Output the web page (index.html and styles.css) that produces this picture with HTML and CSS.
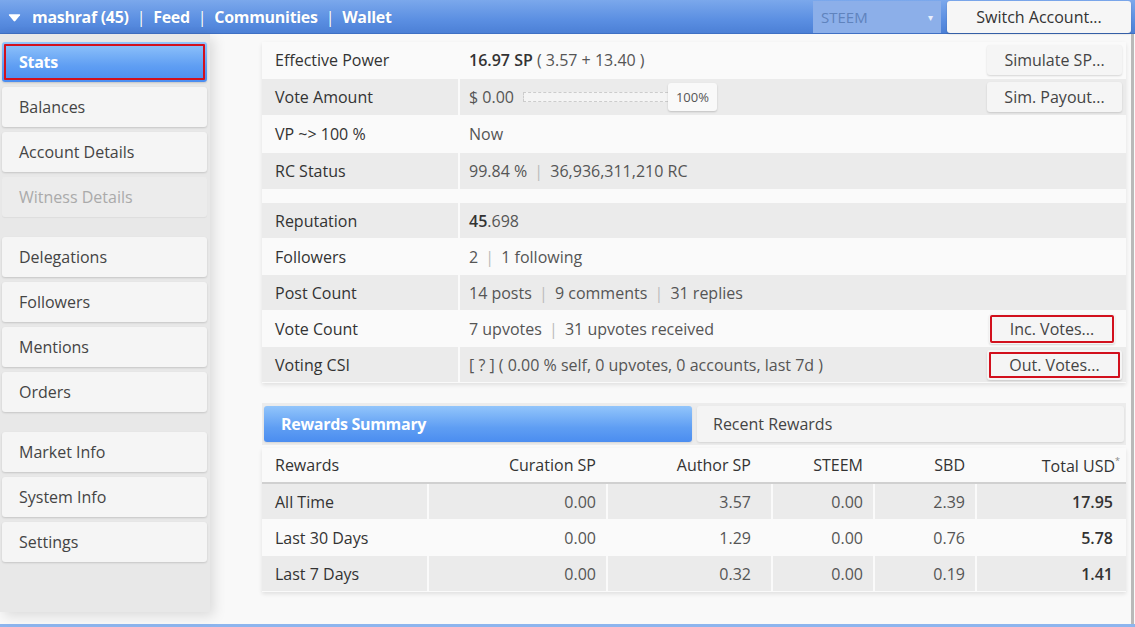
FILE: index.html
```html
<!DOCTYPE html>
<html lang="en">
<head>
    <meta charset="UTF-8">
    <title>Stats - mashraf</title>
    <link rel="stylesheet" href="styles.css">
</head>
<body>

<div class="topbar">
    <div class="nav">
        <svg class="caret" width="13" height="9" viewBox="0 0 13 9"><path d="M1.5 1.2 H11.5 Q12.6 1.2 12 2.2 L7.3 8 Q6.5 8.8 5.7 8 L1 2.2 Q0.4 1.2 1.5 1.2 Z" fill="#fff"/></svg>
        <span>mashraf (45)</span>
        <span class="sep">|</span>
        <span>Feed</span>
        <span class="sep">|</span>
        <span>Communities</span>
        <span class="sep">|</span>
        <span>Wallet</span>
    </div>
    <div class="chain-select">
        <span>STEEM</span>
        <span class="arrow">▾</span>
    </div>
    <button class="switch-btn">Switch Account...</button>
</div>

<div class="app">
    <div class="sidebar">
        <div class="menu-item active marked">Stats</div>
        <div class="menu-item">Balances</div>
        <div class="menu-item">Account Details</div>
        <div class="menu-item disabled group-end">Witness Details</div>
        <div class="menu-item">Delegations</div>
        <div class="menu-item">Followers</div>
        <div class="menu-item">Mentions</div>
        <div class="menu-item group-end">Orders</div>
        <div class="menu-item">Market Info</div>
        <div class="menu-item">System Info</div>
        <div class="menu-item">Settings</div>
    </div>

    <div class="main">
        <div class="card">
            <table class="stats">
                <tr class="big">
                    <td class="label">Effective Power</td>
                    <td class="value"><b>16.97 SP</b> ( 3.57 + 13.40 )</td>
                    <td class="action"><button class="btn">Simulate SP...</button></td>
                </tr>
                <tr class="big alt">
                    <td class="label">Vote Amount</td>
                    <td class="value">
                        <div class="vote-amount">
                            <span>$ 0.00</span>
                            <span class="track"></span>
                            <span class="pct">100%</span>
                        </div>
                    </td>
                    <td class="action"><button class="btn">Sim. Payout...</button></td>
                </tr>
                <tr class="big">
                    <td class="label">VP ~&gt; 100 %</td>
                    <td class="value">Now</td>
                    <td class="action"></td>
                </tr>
                <tr class="big alt">
                    <td class="label">RC Status</td>
                    <td class="value">99.84 % <span class="pipe">|</span> 36,936,311,210 RC</td>
                    <td class="action"></td>
                </tr>
                <tr class="spacer"><td colspan="3"></td></tr>
                <tr class="alt">
                    <td class="label">Reputation</td>
                    <td class="value"><b>45</b>.698</td>
                    <td class="action"></td>
                </tr>
                <tr>
                    <td class="label">Followers</td>
                    <td class="value">2 <span class="pipe">|</span> 1 following</td>
                    <td class="action"></td>
                </tr>
                <tr class="alt">
                    <td class="label">Post Count</td>
                    <td class="value">14 posts <span class="pipe">|</span> 9 comments <span class="pipe">|</span> 31 replies</td>
                    <td class="action"></td>
                </tr>
                <tr>
                    <td class="label">Vote Count</td>
                    <td class="value">7 upvotes <span class="pipe">|</span> 31 upvotes received</td>
                    <td class="action"><button class="btn small marked">Inc. Votes...</button></td>
                </tr>
                <tr class="alt">
                    <td class="label">Voting CSI</td>
                    <td class="value">[ ? ] ( 0.00 % self, 0 upvotes, 0 accounts, last 7d )</td>
                    <td class="action"><button class="btn marked inner">Out. Votes...</button></td>
                </tr>
            </table>
        </div>

        <div class="tabs">
            <div class="tab active">Rewards Summary</div>
            <div class="tab">Recent Rewards</div>
        </div>

        <div class="card rewards-card">
            <table class="rewards">
                <colgroup>
                    <col style="width: 166px">
                    <col style="width: 179px">
                    <col style="width: 165px">
                    <col style="width: 102px">
                    <col style="width: 102px">
                    <col>
                </colgroup>
                <thead>
                    <tr>
                        <th class="name">Rewards</th>
                        <th>Curation SP</th>
                        <th class="wide">Author SP</th>
                        <th>STEEM</th>
                        <th>SBD</th>
                        <th class="total">Total USD<sup>*</sup></th>
                    </tr>
                </thead>
                <tbody>
                    <tr class="alt">
                        <td class="name">All Time</td>
                        <td>0.00</td>
                        <td class="wide">3.57</td>
                        <td>0.00</td>
                        <td>2.39</td>
                        <td class="total">17.95</td>
                    </tr>
                    <tr>
                        <td class="name">Last 30 Days</td>
                        <td>0.00</td>
                        <td class="wide">1.29</td>
                        <td>0.00</td>
                        <td>0.76</td>
                        <td class="total">5.78</td>
                    </tr>
                    <tr class="alt">
                        <td class="name">Last 7 Days</td>
                        <td>0.00</td>
                        <td class="wide">0.32</td>
                        <td>0.00</td>
                        <td>0.19</td>
                        <td class="total">1.41</td>
                    </tr>
                </tbody>
            </table>
        </div>
    </div>
</div>

<div class="bottom-line"></div>

</body>
</html>
```

FILE: styles.css
```css
body {
    font-family: "Open Sans", Arial, sans-serif;
    font-size: 16px;
    margin: 0;
    background-color: #f9f9f9;
    color: #333;
    height: 627px;
    overflow: hidden;
}

/* Barra superior */
.topbar {
    height: 34px;
    display: flex;
    align-items: center;
    background: linear-gradient(#7ba8ec, #5b8fe2 60%, #4c80d6);
    border-bottom: 1px solid #3f70c4;
    box-sizing: border-box;
    padding-right: 4px;
}

.nav {
    flex: 1;
    display: flex;
    align-items: center;
    gap: 8px;
    padding-left: 8px;
    color: #fff;
    font-weight: 700;
    font-size: 16px;
    letter-spacing: -0.3px;
    text-shadow: 0 0 1px rgba(0, 0, 0, 0.15);
}

.nav .caret {
    margin-right: 3px;
    margin-top: 2px;
}

.nav .sep {
    font-weight: 400;
}

.chain-select {
    width: 128px;
    height: 32px;
    box-sizing: border-box;
    display: flex;
    align-items: center;
    justify-content: space-between;
    padding: 0 8px;
    background-color: #8cafe9;
    color: #5f83bd;
    font-size: 15px;
    margin-right: 6px;
}

.chain-select .arrow {
    font-size: 10px;
    color: #e8eefb;
}

.switch-btn {
    width: 184px;
    height: 32px;
    font-family: inherit;
    font-size: 16px;
    color: #333;
    background-color: #f6f6f6;
    border: none;
    border-radius: 3px;
    box-shadow: 0 1px 2px rgba(0, 0, 0, 0.2);
}

/* Corpo */
.app {
    display: flex;
    height: 590px;
    border-right: 3px solid #b9b9b9;
    box-sizing: border-box;
    width: 1134px;
}

.sidebar {
    width: 210px;
    height: 578px;
    background-color: #e8e8e8;
    padding: 8px 3px 0 2px;
    box-sizing: border-box;
    box-shadow: 4px 4px 12px rgba(0, 0, 0, 0.12);
    flex-shrink: 0;
}

.menu-item {
    height: 40px;
    line-height: 40px;
    padding-left: 17px;
    margin-bottom: 5px;
    background-color: #f5f5f5;
    border-radius: 3px;
    color: #444;
    box-shadow: 0 1px 2px rgba(0, 0, 0, 0.15);
}

.menu-item.group-end {
    margin-bottom: 20px;
}

.menu-item.active {
    background: linear-gradient(#92c5fb, #5f9ef3 60%, #4b8df0);
    color: #fff;
    font-weight: 700;
    letter-spacing: -0.3px;
}

.menu-item.disabled {
    background-color: #ececec;
    color: #aaa;
    box-shadow: 0 1px 1px rgba(0, 0, 0, 0.05);
}

/* Marcações em vermelho */
.marked {
    outline: 2px solid #d2101d;
    outline-offset: -3px;
}

.menu-item.marked {
    outline-offset: -4px;
}

.main {
    flex: 1;
    padding: 8px 5px 0 52px;
    box-sizing: border-box;
}

.card {
    background-color: #fafafa;
    box-shadow: 0 2px 4px rgba(0, 0, 0, 0.1);
}

.rewards-card {
    margin-top: 3px;
}

table {
    width: 100%;
    border-collapse: collapse;
}

.stats td {
    height: 35px;
    padding: 0;
    border-bottom: 1px solid #fafafa;
    color: #555;
}

.stats tr.big td {
    height: 36px;
}

.stats tr.alt td {
    background-color: #ebebeb;
}

.stats tr.spacer td {
    height: 12px;
    background-color: #fafafa;
}

.stats td.label {
    width: 183px;
    padding-left: 13px;
    color: #333;
    border-right: 2px solid #fafafa;
}

.stats td.value {
    padding-left: 9px;
}

.stats td.value b,
.rewards td.total {
    font-weight: 600;
    color: #333;
}

.stats td.action {
    text-align: right;
    padding-right: 4px;
    width: 140px;
}

.pipe {
    color: #bbb;
    margin: 0 3px;
}

.btn {
    width: 135px;
    height: 30px;
    font-family: inherit;
    font-size: 16px;
    color: #444;
    background-color: #f5f5f5;
    border: none;
    border-radius: 3px;
    box-shadow: 0 1px 2px rgba(0, 0, 0, 0.15);
    vertical-align: middle;
}

.btn.small {
    width: 126px;
    margin-right: 7px;
}

.btn.inner {
    outline-offset: -4px;
}

.vote-amount {
    display: flex;
    align-items: center;
}

.vote-amount .track {
    width: 144px;
    height: 8px;
    margin-left: 9px;
    border: 1px dashed #ccc;
    border-right: none;
    background-color: #f4f4f4;
}

.vote-amount .pct {
    width: 49px;
    height: 28px;
    line-height: 28px;
    text-align: center;
    font-size: 13px;
    background-color: #f9f9f9;
    border-radius: 3px;
    box-shadow: 0 1px 2px rgba(0, 0, 0, 0.18);
}

/* Abas */
.tabs {
    margin-top: 20px;
    display: flex;
    gap: 5px;
    padding: 3px 2px;
    background-color: #ececec;
}

.tab {
    flex: 1;
    height: 36px;
    line-height: 36px;
    padding-left: 16px;
    border-radius: 3px;
    background-color: #f4f4f4;
    color: #444;
    box-shadow: 0 1px 2px rgba(0, 0, 0, 0.1);
}

.tab.active {
    background: linear-gradient(#92c5fb, #5f9ef3 60%, #4b8df0);
    color: #fff;
    font-weight: 700;
    letter-spacing: -0.3px;
    padding-left: 17px;
}

.rewards {
    table-layout: fixed;
}

.rewards th,
.rewards td {
    height: 35px;
    padding: 0 10px 0 0;
    text-align: right;
    color: #555;
    border-right: 2px solid #fafafa;
    border-bottom: 1px solid #fafafa;
    white-space: nowrap;
}

.rewards th {
    font-weight: 400;
    color: #333;
    height: 34px;
    border-bottom: 2px solid #d0d0d0;
}

.rewards tr.alt td {
    background-color: #ebebeb;
}

.rewards .name {
    text-align: left;
    padding-left: 13px;
    color: #333;
}

.rewards .wide {
    padding-right: 20px;
}

.rewards .total {
    padding-right: 13px;
    border-right: none;
}

.rewards th.total {
    padding-right: 6px;
}

.rewards sup {
    font-size: 9px;
    color: #888;
    vertical-align: 8px;
}

.bottom-line {
    height: 3px;
    background-color: #8db5ee;
}
```
